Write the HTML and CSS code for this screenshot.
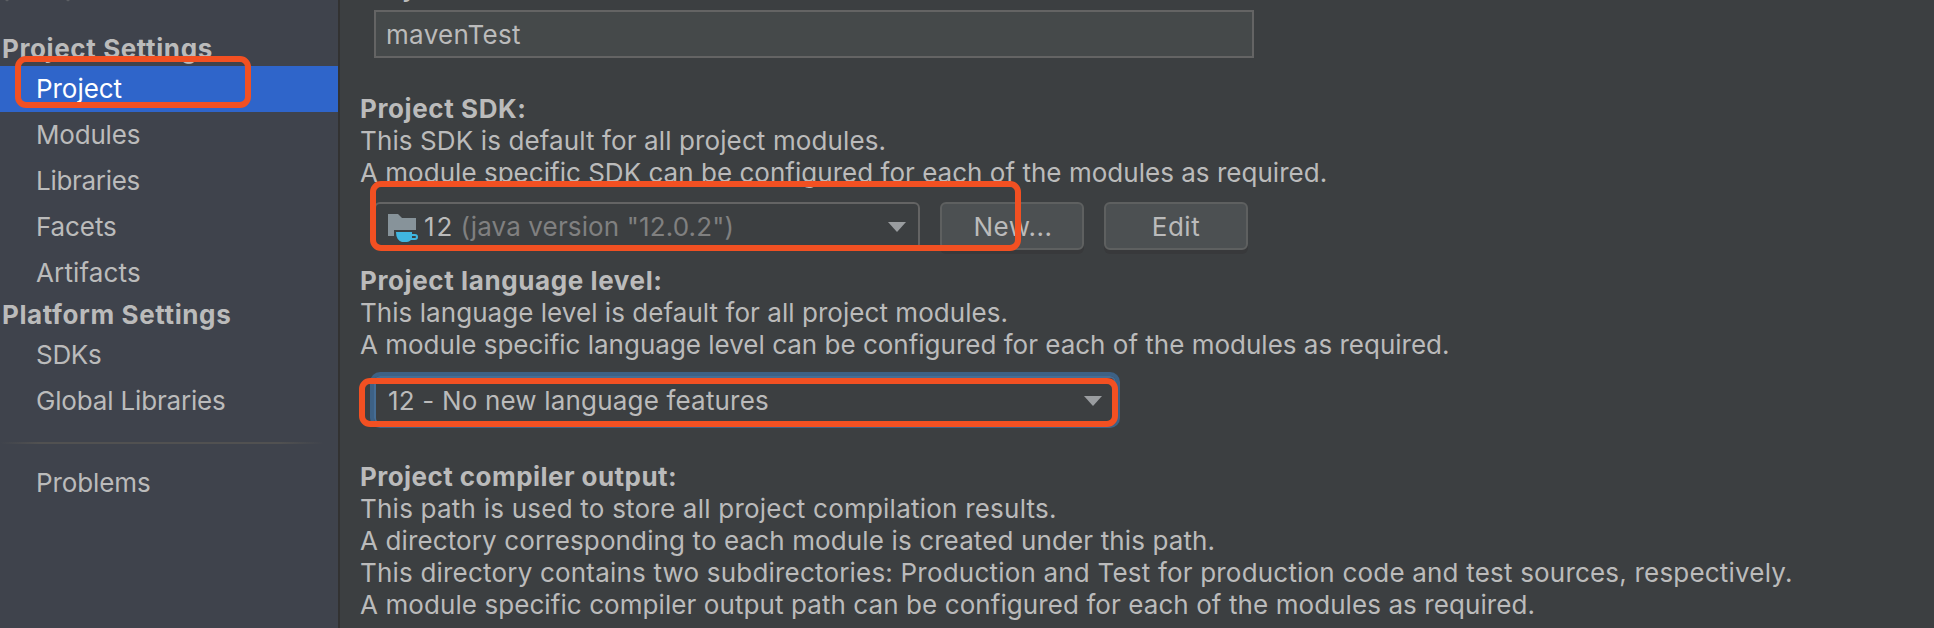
FILE: index.html
```html
<!DOCTYPE html>
<html lang="en">
<head>
<meta charset="utf-8">
<title>Project Structure</title>
<link rel="stylesheet" href="styles.css">
</head>
<body>
<div class="window">
  <nav class="sidebar">
    <svg class="nav-icons" width="80" height="30" viewBox="0 0 80 30"><path fill="#5d6064" d="M5 0h4l-2 1.500zM66 0h4l-2 1.500z"/></svg>
    <h2 class="group">Project Settings</h2>
    <a class="item item-project selected">Project</a>
    <a class="item item-modules">Modules</a>
    <a class="item item-libraries">Libraries</a>
    <a class="item item-facets">Facets</a>
    <a class="item item-artifacts">Artifacts</a>
    <h2 class="group">Platform Settings</h2>
    <a class="item item-sdks">SDKs</a>
    <a class="item item-global">Global Libraries</a>
    <div class="divider"></div>
    <a class="item item-problems">Problems</a>
  </nav>

  <main class="content">
    <div class="name-label">Project name:</div>
    <div class="name-input">mavenTest</div>

    <section class="sdk">
      <h3 class="title">Project SDK:</h3>
      <p class="line sdk-1">This SDK is default for all project modules.</p>
      <p class="line sdk-2">A module specific SDK can be configured for each of the modules as required.</p>
      <div class="controls">
        <div class="select">
          <svg class="folder" width="32" height="30" viewBox="0 0 32 30">
            <path fill="#87939a" d="M0 0h10l4 4h14v12H6v6H0z"/>
            <path fill="#40b6e0" fill-rule="evenodd" d="M8 18h16v2h3a3 3 0 0 1 0 6h-4q-2 2-4 2h-5q-6-2-6-10zM24 22v2h3a1 1 0 0 0 0-2z"/>
          </svg>
          <span class="sdk-name">12</span>
          <span class="sdk-version">(java version "12.0.2")</span>
          <svg class="arrow" width="18" height="10" viewBox="0 0 18 10"><path fill="#9a9da0" d="M0 0h18L9 10z"/></svg>
        </div>
        <button class="button button-new">New...</button>
        <button class="button button-edit">Edit</button>
      </div>
    </section>

    <section class="level">
      <h3 class="title">Project language level:</h3>
      <p class="line level-1">This language level is default for all project modules.</p>
      <p class="line level-2">A module specific language level can be configured for each of the modules as required.</p>
      <div class="select focused">
        <span class="level-name">12 - No new language features</span>
        <svg class="arrow" width="18" height="10" viewBox="0 0 18 10"><path fill="#9a9da0" d="M0 0h18L9 10z"/></svg>
      </div>
    </section>

    <section class="output">
      <h3 class="title title-output">Project compiler output:</h3>
      <p class="line output-1">This path is used to store all project compilation results.</p>
      <p class="line output-2">A directory corresponding to each module is created under this path.</p>
      <p class="line output-3">This directory contains two subdirectories: Production and Test for production code and test sources, respectively.</p>
      <p class="line output-4">A module specific compiler output path can be configured for each of the modules as required.</p>
    </section>
  </main>

  <div class="mark mark-project"></div>
  <div class="mark mark-sdk"></div>
  <div class="mark mark-level"></div>
</div>
</body>
</html>
```
FILE: styles.css
```css
* { box-sizing: border-box; }

body {
  margin: 0;
  background: #3c3f41;
  color: #bbbbbb;
  font: 400 26px/32px Inter, "Liberation Sans", sans-serif;
}

h2, h3, p { margin: 0; font-size: 26px; white-space: nowrap; }

.window {
  position: relative;
  display: flex;
  width: 1934px;
  height: 628px;
  overflow: hidden;
}

/* Sidebar */
.sidebar {
  width: 340px;
  flex: none;
  background: #3f434c;
  border-right: 2px solid #323232;
}
.nav-icons { display: block; }
.group { height: 36px; padding-left: 2px; line-height: 38px; letter-spacing: 0.61px; }
.item { display: block; height: 46px; padding-left: 36px; line-height: 46px; white-space: nowrap; }
.selected { background: #2f65ca; color: #ffffff; }
.item-project { letter-spacing: -0.05px; }
.item-modules { letter-spacing: -0.2px; }
.item-libraries { letter-spacing: -0.3px; }
.item-facets { letter-spacing: -0.1px; }
.item-artifacts { letter-spacing: 0.14px; }
.item-sdks { letter-spacing: -0.3px; }
.item-global { letter-spacing: -0.17px; }
.item-problems { letter-spacing: -0.1px; }
.divider {
  height: 2px;
  margin: 18px 14px 16px 0;
  background: linear-gradient(to right, transparent, #515151 12%, #515151 86%, transparent);
}

/* Main pane */
.content { flex: 1; padding-left: 20px; }
.name-label { height: 32px; margin: -28px 0 6px; font-weight: 700; letter-spacing: 0.6px; }
.name-input {
  width: 880px;
  height: 48px;
  margin-left: 14px;
  padding-left: 10px;
  border: 2px solid #646464;
  background: #45494a;
  line-height: 45px;
  letter-spacing: 0.32px;
}
.sdk { padding-top: 35px; }
.title, .line { height: 32px; }
.title { letter-spacing: 0.6px; }
.title-output { letter-spacing: 0.45px; }
.sdk-1 { letter-spacing: 0.112px; }
.sdk-2 { letter-spacing: 0.025px; }
.level-1 { letter-spacing: 0.048px; }
.output-1 { letter-spacing: 0.224px; }
.output-2 { letter-spacing: 0.121px; }
.output-3 { letter-spacing: 0.195px; }
.output-4 { letter-spacing: 0.08px; }

.controls { display: flex; gap: 20px; padding: 13px 0 0 14px; }
.select {
  display: flex;
  align-items: center;
  width: 546px;
  height: 48px;
  padding: 0 12px;
  border: 2px solid #646464;
  border-radius: 6px;
}
.select span { padding-top: 2px; }
.folder { flex: none; margin-top: 6px; }
.sdk-name { margin-left: 4px; letter-spacing: 2px; }
.sdk-version { margin-left: 6px; color: #808080; letter-spacing: 0.134px; }
.arrow { flex: none; margin: 2px 0 0 auto; }
.button {
  width: 144px;
  height: 48px;
  padding: 2px 0 0;
  border: 2px solid #5e6060;
  border-radius: 6px;
  background: #4c5052;
  box-shadow: 0 4px 0 #38393b;
  color: #bbbbbb;
  font: inherit;
  letter-spacing: 0.5px;
}
.button-new { padding-left: 2px; }

.level { padding-top: 15px; }
.focused {
  width: 742px;
  margin: 15px 0 0 14px;
  border-color: #466d94;
  box-shadow: 0 0 0 4px #3d6185;
}
.level-name { letter-spacing: 0.178px; }
.output { padding-top: 37px; }

/* Highlight boxes over the settings */
.mark { position: absolute; border: 6px solid #f25022; border-radius: 11px; }
.mark-project { left: 15px; top: 56px; width: 236px; height: 52px; }
.mark-sdk { left: 370px; top: 181px; width: 651px; height: 70px; }
.mark-level { left: 359px; top: 378px; width: 759px; height: 49px; }
```
